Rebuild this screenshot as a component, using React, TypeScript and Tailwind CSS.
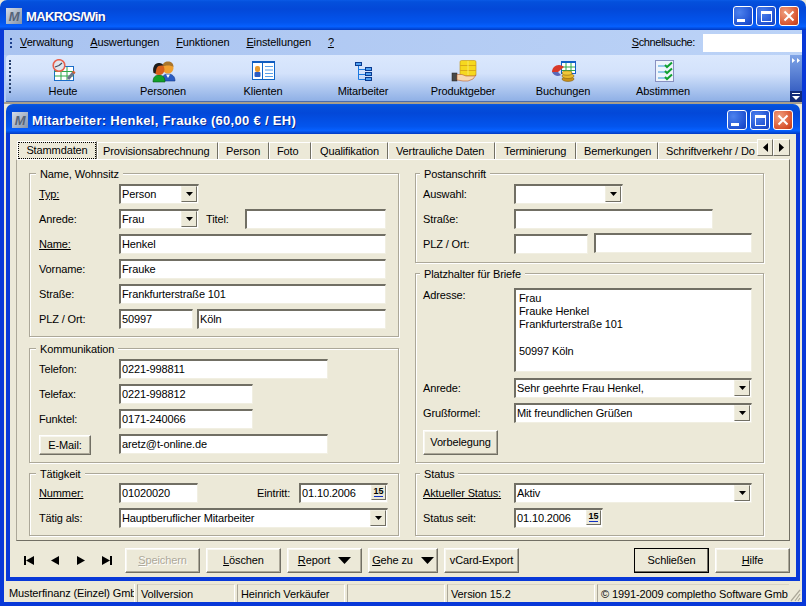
import type { ReactNode } from "react";

const titleBg =
  "bg-[linear-gradient(180deg,#0a5be6_0%,#0450dc_6%,#0348d8_30%,#0355ee_75%,#0660ff_88%,#0245d2_97%,#0236c0_100%)]";
const titleText =
  "ml-1 mt-px text-white font-bold text-[13px] whitespace-nowrap [text-shadow:1px_1px_0_#0a2a90]";

function AppIcon() {
  return (
    <div className="w-4 h-4 shrink-0 bg-[linear-gradient(135deg,#d4dce8,#8492a8)] flex items-center justify-center">
      <span className="text-[13px] leading-none font-bold italic text-[#566478] [text-shadow:none]">M</span>
    </div>
  );
}

function WinButtons() {
  const base = "w-5 h-5 rounded-[3px] border border-white flex items-center justify-center";
  const blue = "bg-[radial-gradient(circle_at_30%_30%,#4d82ee,#1d4fd0_75%,#1840b8)]";
  return (
    <div className="flex gap-[3px]">
      <div className={`${base} ${blue} items-end pb-[3px] justify-start pl-[3px]`}>
        <div className="w-[8px] h-[3px] bg-white" />
      </div>
      <div className={`${base} ${blue}`}>
        <div className="w-[11px] h-[11px] border border-white border-t-[3px]" />
      </div>
      <div className={`${base} bg-[radial-gradient(circle_at_30%_30%,#f0a080,#d8532e_70%,#b83a18)]`}>
        <svg width="12" height="12" viewBox="0 0 12 12">
          <path d="M1.5 1.5 10.5 10.5M10.5 1.5 1.5 10.5" stroke="#fff" strokeWidth="2" />
        </svg>
      </div>
    </div>
  );
}

function IconHeute() {
  return (
    <svg width="32" height="24" viewBox="0 0 32 24">
      <rect x="7.5" y="7.5" width="19" height="14" fill="#fff" stroke="#1a6cc8" />
      <path d="M7.5 12.5H26.5M7.5 17H26.5M14 8V21M20 8V21" stroke="#2fa84a" />
      <circle cx="12" cy="6.500" r="5.800" fill="#dfe6ee" stroke="#e8604c" strokeWidth="1.600" />
      <path d="M12 6.500 15 4M12 6.500 8 8" stroke="#3f4c5e" strokeWidth="1.200" />
      <path d="M27 13 21 20" stroke="#6a7488" strokeWidth="3" />
      <path d="M27.5 12.5 26 14" stroke="#d8602c" strokeWidth="3" />
    </svg>
  );
}

function IconPersonen() {
  return (
    <svg width="32" height="24" viewBox="0 0 32 24">
      <path d="M15 22c0-5 2-7 6-7s7 2 7 7Z" fill="#2a5cc4" stroke="#143a88" strokeWidth=".6" />
      <path d="M19 15.500 21 19 23 15.500Z" fill="#fff" />
      <circle cx="21" cy="9" r="5.500" fill="#f0a030" />
      <path d="M15.500 8c0-4 2.500-5.500 5.500-5.500s5.500 1.500 5.500 5.500c-2-2-9-2-11 0Z" fill="#a8752c" />
      <path d="M6 23c0-5 2.500-7 6-7s6 2 6 7Z" fill="#12a028" stroke="#0a5a18" strokeWidth=".6" />
      <circle cx="12" cy="10.500" r="5.500" fill="#d8601c" />
      <path d="M6.500 14c-1.500-6 1.500-10 5-10s4 1 5 2.500c-2.500 0-5.500 0-6.500 2s-1 4-1.500 6Z" fill="#1c1c1c" />
    </svg>
  );
}

function IconKlienten() {
  return (
    <svg width="32" height="24" viewBox="0 0 32 24">
      <rect x="5.500" y="3.500" width="22" height="17" fill="#fff" stroke="#0f66c8" />
      <rect x="5" y="2" width="23" height="2" fill="#0f5cc0" />
      <path d="M15.500 4V20" stroke="#0f66c8" />
      <path d="M18 7.500H26M18 11H26M18 14.500H26M18 17.500H26" stroke="#5aa0e8" />
      <rect x="8" y="7" width="5" height="6" rx="2" fill="#e89a2c" />
      <rect x="7.500" y="13" width="6" height="5" rx="1" fill="#2a5cc4" />
    </svg>
  );
}

function IconMitarbeiter() {
  return (
    <svg width="32" height="24" viewBox="0 0 32 24">
      <path d="M11.500 7V20.500H18M11.500 10.500H18M11.500 15.500H18" stroke="#1a78e0" fill="none" />
      <rect x="8.500" y="3.500" width="6" height="3" fill="#4fa0f0" stroke="#0a3a90" />
      <rect x="18.500" y="8.500" width="6" height="3" fill="#4fa0f0" stroke="#0a3a90" />
      <rect x="18.500" y="13.500" width="6" height="3" fill="#4fa0f0" stroke="#0a3a90" />
      <rect x="18.500" y="18.500" width="6" height="3" fill="#4fa0f0" stroke="#0a3a90" />
    </svg>
  );
}

function IconProdukt() {
  return (
    <svg width="32" height="24" viewBox="0 0 32 24">
      <rect x="13" y="1.500" width="16" height="15.500" rx="1.500" fill="#f6d81e" stroke="#c09010" strokeWidth=".6" />
      <path d="M13 6.500H29M13 11.500H29" stroke="#d8a818" />
      <path d="M21 2V16" stroke="#f8e860" />
      <rect x="5" y="14" width="5" height="8" fill="#4a4a48" stroke="#222" strokeWidth=".5" />
      <path d="M10 15.500h5l4 1.500h8l2-1-3 4-5 2h-5l-6-1Z" fill="#f8d8b0" stroke="#b86030" strokeWidth=".6" />
    </svg>
  );
}

function IconBuchungen() {
  return (
    <svg width="32" height="24" viewBox="0 0 32 24">
      <rect x="14.500" y="2.500" width="14" height="12" fill="#fff" stroke="#1060c8" />
      <rect x="14" y="2" width="15" height="2" fill="#1060c8" />
      <path d="M15 8H28M15 11.500H28M19 4V14M24 4V14" stroke="#2fa84a" />
      <path d="M5 13c0-4 3-7 7-7 2 0 4 1 5 2l-6 5Z" fill="#d83828" />
      <path d="M5 13 11 13l3 3c-3 2-7 1-9-3Z" fill="#5a68b8" />
      <ellipse cx="21" cy="20" rx="6" ry="2.500" fill="#c89018" stroke="#7a5408" strokeWidth=".5" />
      <ellipse cx="21" cy="17" rx="6" ry="2.500" fill="#e8b828" stroke="#7a5408" strokeWidth=".5" />
      <ellipse cx="20" cy="14" rx="5" ry="2.200" fill="#f0c838" stroke="#7a5408" strokeWidth=".5" />
    </svg>
  );
}

function IconAbstimmen() {
  return (
    <svg width="32" height="24" viewBox="0 0 32 24">
      <rect x="8.500" y="1.500" width="18" height="21" fill="#eef4fc" stroke="#8890c0" />
      <path d="M11 7H18M11 13H18M11 19H18" stroke="#3a98d8" />
      <path d="M18 6 20 8 25 3.500M18 12 20 14 25 9.500M18 18 20 20 25 15.500" stroke="#10a030" strokeWidth="2" fill="none" />
    </svg>
  );
}

const tools: [string, ReactNode][] = [
  ["Heute", <IconHeute />],
  ["Personen", <IconPersonen />],
  ["Klienten", <IconKlienten />],
  ["Mitarbeiter", <IconMitarbeiter />],
  ["Produktgeber", <IconProdukt />],
  ["Buchungen", <IconBuchungen />],
  ["Abstimmen", <IconAbstimmen />],
];

const inputBorder = "border-t-2 border-l-2 border-r border-b border-t-[#716f64] border-l-[#716f64] border-r-[#f1efe2] border-b-[#f1efe2] bg-white";

function Input({ w, children, className = "" }: { w: string; children?: ReactNode; className?: string }) {
  return (
    <div className={`${w} h-5 ${inputBorder} pl-px leading-[16px] whitespace-nowrap overflow-hidden ${className}`}>{children}</div>
  );
}

function Arrow() {
  return (
    <div className="w-4 h-4 shrink-0 bg-[#ece9d8] border border-t-[#f1efe2] border-l-[#f1efe2] border-r-[#716f64] border-b-[#716f64] flex items-center justify-center">
      <svg width="7" height="4" viewBox="0 0 7 4">
        <path d="M0 0H7L3.500 4Z" fill="#000" />
      </svg>
    </div>
  );
}

function Combo({ w, children }: { w: string; children?: ReactNode }) {
  return (
    <div className={`${w} h-5 ${inputBorder} flex justify-between pr-px`}>
      <span className="pl-px leading-[16px] whitespace-nowrap">{children}</span>
      <Arrow />
    </div>
  );
}

function DateBox({ w, children }: { w: string; children: ReactNode }) {
  return (
    <div className={`${w} h-5 ${inputBorder} flex justify-between pr-px`}>
      <span className="pl-px leading-[16px]">{children}</span>
      <div className="w-[15px] h-[15px] bg-[#ece9d8] border border-t-[#f1efe2] border-l-[#f1efe2] border-r-[#716f64] border-b-[#716f64] flex items-start justify-center">
        <span className="text-[9px] leading-[10px] font-bold border-b border-[#1030c0]">15</span>
      </div>
    </div>
  );
}

function Label({ children, w = "w-20", u = false }: { children: ReactNode; w?: string; u?: boolean }) {
  return <div className={`${w} shrink-0 leading-5 whitespace-nowrap ${u ? "underline" : ""}`}>{children}</div>;
}

function Row({ children }: { children: ReactNode }) {
  return <div className="flex h-5">{children}</div>;
}

function Group({ title, h, w, pl = "pl-[9px]", children }: { title: string; h: string; w: string; pl?: string; children: ReactNode }) {
  return (
    <div className={`${w} ${h} ${pl} border border-[#aca899] shadow-[inset_1px_1px_0_#fff,1px_1px_0_#fff]`}>
      <div className="w-fit h-[14px] -mt-[7px] -ml-[3px] mb-[3px] px-1 bg-[#ece9d8] leading-[14px] whitespace-nowrap">{title}</div>
      <div className="flex flex-col gap-[5px]">{children}</div>
    </div>
  );
}

function Button({ w, children, className = "" }: { w: string; children: ReactNode; className?: string }) {
  return (
    <div
      className={`${w} h-[25px] shrink-0 flex items-center justify-center gap-2 bg-[#ece9d8] border border-t-white border-l-white border-r-[#716f64] border-b-[#716f64] shadow-[inset_-1px_-1px_0_#aca899,inset_1px_1px_0_#f8f7f0] whitespace-nowrap ${className}`}
    >
      {children}
    </div>
  );
}

function DownTri() {
  return (
    <svg width="13" height="7" viewBox="0 0 13 7">
      <path d="M0 0H13L6.500 7Z" fill="#000" />
    </svg>
  );
}

function Nav({ d }: { d: string }) {
  return (
    <div className="w-[26px] flex justify-center">
      <svg width="11" height="9" viewBox="0 0 11 9">
        <path d={d} fill="#000" />
      </svg>
    </div>
  );
}

const tabs: [string, string][] = [
  ["Provisionsabrechnung", "w-[121px] pl-[5px]"],
  ["Person", "w-[51px] pl-[7px]"],
  ["Foto", "w-[42px] pl-[7px]"],
  ["Qualifikation", "w-[77px] pl-[8px]"],
  ["Vertrauliche Daten", "w-[107px] pl-[7px]"],
  ["Terminierung", "w-[81px] pl-[8px]"],
  ["Bemerkungen", "w-[82px] pl-[7px]"],
  ["Schriftverkehr / Do", "w-[100px] pl-[7px]"],
];

function StatusCell({ w, children, className = "" }: { w: string; children?: ReactNode; className?: string }) {
  return (
    <div className={`${w} h-[18px] shrink-0 pl-[3px] leading-[19px] whitespace-nowrap overflow-hidden border-l border-t border-t-[#d8d4c4] border-l-[#aca899] border-r border-r-white ${className}`}>
      {children}
    </div>
  );
}

export default function App() {
  return (
    <div className="w-[806px] h-[606px] overflow-hidden bg-[#ece9d8] text-[11px] text-black tracking-[-0.12px] font-['Liberation_Sans',Arial,sans-serif] select-none">
      {/* main title */}
      <div className={`h-[30px] flex items-center pt-[2px] pl-[6px] pr-[7px] ${titleBg} rounded-t-[7px]`}>
        <AppIcon />
        <span className={`${titleText} tracking-[-0.6px]`}>MAKROS/Win</span>
        <div className="ml-auto">
          <WinButtons />
        </div>
      </div>

      <div className="h-[576px] border-x-4 border-b-4 border-[#0838d8]">
        {/* menu */}
        <div className="h-[25px] flex items-center pl-[6px] bg-[linear-gradient(90deg,#a9c3f0,#bcd3f7)]">
          <div className="w-[2px] h-[10px] border-l-2 border-dotted border-[#1c3f8c]" />
          <div className="flex ml-[8px] gap-[17px]">
            <span><u>V</u>erwaltung</span>
            <span><u>A</u>uswertungen</span>
            <span><u>F</u>unktionen</span>
            <span><u>E</u>instellungen</span>
            <span><u>?</u></span>
          </div>
          <span className="ml-auto mr-2 tracking-[-0.4px]"><u>S</u>chnellsuche:</span>
          <div className="w-[99px] h-[18px] bg-white" />
        </div>

        {/* toolbar */}
        <div className="h-[47px] flex pl-[2px] bg-[#b4ccf4]">
          <div className="flex-1 flex rounded-tl-[4px] border-b border-[#4a6cb0] bg-[linear-gradient(180deg,#dbe8fd,#d3e2fb_40%,#8fb0e6)] pl-[3px]">
            <div className="mt-[5px] w-[2px] h-[33px] border-l-2 border-dotted border-[#27416e]" />
            <div className="flex ml-[2px]">
              {tools.map(([name, icon]) => (
                <div key={name} className="w-[100px] flex flex-col items-center pt-[4px]">
                  {icon}
                  <span className="mt-[1px] leading-[14px]">{name}</span>
                </div>
              ))}
            </div>
          </div>
          <div className="w-[12px] flex flex-col justify-between bg-[linear-gradient(180deg,#7fa4e6,#3a62c4_75%)] rounded-br-[3px]">
            <svg width="12" height="12" viewBox="0 0 12 12">
              <path d="M2 3 5 5.500 2 8ZM7 3 10 5.500 7 8Z" fill="#fff" />
            </svg>
            <div className="h-[11px] bg-[#112a78] flex justify-center items-center">
              <svg width="8" height="7" viewBox="0 0 8 7">
                <path d="M0 0H8V1H0ZM0 3H8L4 7Z" fill="#fff" />
              </svg>
            </div>
          </div>
        </div>
        <div className="h-[2px] bg-[#a89f8c]" />

        {/* child window */}
        <div className="mx-[2px] rounded-t-[7px] overflow-hidden">
          <div className={`h-[30px] flex items-center pt-[2px] pl-[6px] pr-[7px] ${titleBg}`}>
            <AppIcon />
            <span className={`${titleText} tracking-[0.3px]`}>Mitarbeiter: Henkel, Frauke (60,00 € / EH)</span>
            <div className="ml-auto">
              <WinButtons />
            </div>
          </div>
          <div className="h-[447px] border-x-4 border-b-4 border-[#0838d8] px-[6px]">
            {/* tabs */}
            <div className="h-[25px] flex items-end">
              <div className="w-[741px] flex items-end overflow-hidden">
                <div className="w-[80px] h-[19px] shrink-0 ml-px -mb-px z-10 relative bg-[#ece9d8] border-t border-l border-white border-r border-r-[#716f64] flex items-start justify-center">
                  <span className="mt-px w-[76px] h-[15px] text-center outline-1 outline-dotted outline-black leading-[15px]">Stammdaten</span>
                </div>
                {tabs.map(([name, w]) => (
                  <div key={name} className={`${w} h-[17px] shrink-0 leading-[16px] whitespace-nowrap border-t border-l border-white border-r border-r-[#716f64] overflow-hidden`}>
                    {name}
                  </div>
                ))}
              </div>
              <div className="flex mb-[3px]">
                <div className="w-4 h-[17px] bg-[#ece9d8] border border-t-white border-l-white border-r-[#716f64] border-b-[#716f64] flex items-center justify-center">
                  <svg width="5" height="9" viewBox="0 0 5 9"><path d="M5 0V9L0 4.500Z" fill="#000" /></svg>
                </div>
                <div className="w-[17px] h-[17px] bg-[#ece9d8] border border-t-white border-l-white border-r-[#716f64] border-b-[#716f64] flex items-center justify-center">
                  <svg width="5" height="9" viewBox="0 0 5 9"><path d="M0 0V9L5 4.500Z" fill="#000" /></svg>
                </div>
              </div>
            </div>

            {/* pane */}
            <div className="h-[382px] border border-[#aca899] border-t-white border-r-[#716f64] border-b-[#716f64] pt-[13px] pl-[12px] flex gap-4">
              <div className="w-[370px] flex flex-col">
                <Group title="Name, Wohnsitz" w="w-[370px]" h="h-[164px]">
                  <Row>
                    <Label u>Typ:</Label>
                    <Combo w="w-[80px]">Person</Combo>
                  </Row>
                  <Row>
                    <Label>Anrede:</Label>
                    <Combo w="w-[80px]">Frau</Combo>
                    <Label w="w-[39px] ml-[7px]">Titel:</Label>
                    <Input w="w-[141px]" />
                  </Row>
                  <Row>
                    <Label u>Name:</Label>
                    <Input w="w-[267px]">Henkel</Input>
                  </Row>
                  <Row>
                    <Label>Vorname:</Label>
                    <Input w="w-[267px]">Frauke</Input>
                  </Row>
                  <Row>
                    <Label>Straße:</Label>
                    <Input w="w-[267px]">Frankfurterstraße 101</Input>
                  </Row>
                  <Row>
                    <Label>PLZ / Ort:</Label>
                    <Input w="w-[74px]">50997</Input>
                    <Input w="w-[189px] ml-[4px]">Köln</Input>
                  </Row>
                </Group>
                <div className="h-[11px] shrink-0" />
                <Group title="Kommunikation" w="w-[370px]" h="h-[115px]">
                  <Row>
                    <Label>Telefon:</Label>
                    <Input w="w-[209px]">0221-998811</Input>
                  </Row>
                  <Row>
                    <Label>Telefax:</Label>
                    <Input w="w-[134px]">0221-998812</Input>
                  </Row>
                  <Row>
                    <Label>Funktel:</Label>
                    <Input w="w-[134px]">0171-240066</Input>
                  </Row>
                  <Row>
                    <div className="w-20 shrink-0 pt-px">
                      <Button w="w-[52px]" className="!h-[20px]">E-Mail:</Button>
                    </div>
                    <Input w="w-[209px]">aretz@t-online.de</Input>
                  </Row>
                </Group>
                <div className="h-[10px] shrink-0" />
                <Group title="Tätigkeit" w="w-[370px]" h="h-[63px]">
                  <div className="flex h-5 -mt-[1px]">
                    <Label u>Nummer:</Label>
                    <Input w="w-[79px]">01020020</Input>
                    <Label w="w-[42px] ml-[59px]">Eintritt:</Label>
                    <DateBox w="w-[89px]">01.10.2006</DateBox>
                  </div>
                  <Row>
                    <Label>Tätig als:</Label>
                    <Combo w="w-[269px]">Hauptberuflicher Mitarbeiter</Combo>
                  </Row>
                </Group>
              </div>

              <div className="w-[349px] flex flex-col">
                <Group title="Postanschrift" w="w-[349px]" h="h-[90px]" pl="pl-[7px]">
                  <Row>
                    <Label w="w-[91px]">Auswahl:</Label>
                    <Combo w="w-[109px]" />
                  </Row>
                  <Row>
                    <Label w="w-[91px]">Straße:</Label>
                    <Input w="w-[199px]" />
                  </Row>
                  <Row>
                    <Label w="w-[91px]">PLZ / Ort:</Label>
                    <Input w="w-[74px]" />
                    <Input w="w-[158px] ml-[6px] -mt-px" />
                  </Row>
                </Group>
                <div className="h-[10px] shrink-0" />
                <Group title="Platzhalter für Briefe" w="w-[349px]" h="h-[190px]" pl="pl-[7px]">
                  <div className="flex h-[84px] mt-[4px]">
                    <div className="-mt-[3px]">
                      <Label w="w-[91px]">Adresse:</Label>
                    </div>
                    <div className={`w-[238px] h-[84px] ${inputBorder} pl-[3px] pt-[2px] leading-[13px]`}>
                      <div>Frau</div>
                      <div>Frauke Henkel</div>
                      <div>Frankfurterstraße 101</div>
                      <div className="h-[14px]" />
                      <div>50997 Köln</div>
                    </div>
                  </div>
                  <div className="flex h-5 mt-[1px]">
                    <Label w="w-[91px]">Anrede:</Label>
                    <Combo w="w-[238px]">Sehr geehrte Frau Henkel,</Combo>
                  </div>
                  <Row>
                    <Label w="w-[91px]">Grußformel:</Label>
                    <Combo w="w-[238px]">Mit freundlichen Grüßen</Combo>
                  </Row>
                  <div className="mt-[2px]">
                    <Button w="w-[75px]">Vorbelegung</Button>
                  </div>
                </Group>
                <div className="h-[10px] shrink-0" />
                <Group title="Status" w="w-[349px]" h="h-[63px]" pl="pl-[7px]">
                  <div className="flex h-5 -mt-[1px]">
                    <Label w="w-[91px]" u>Aktueller Status:</Label>
                    <Combo w="w-[238px]">Aktiv</Combo>
                  </div>
                  <Row>
                    <Label w="w-[91px]">Status seit:</Label>
                    <DateBox w="w-[89px]">01.10.2006</DateBox>
                  </Row>
                </Group>
              </div>
            </div>

            {/* bottom bar */}
            <div className="flex pt-[7px] items-start">
              <div className="w-[109px] h-[25px] flex items-center">
                <Nav d="M0 0H2V9H0ZM2 4.500 10 0V9Z" />
                <Nav d="M1 4.500 9 0V9Z" />
                <Nav d="M1 0 9 4.500 1 9Z" />
                <Nav d="M0 0 8 4.500 0 9ZM8 0H10V9H8Z" />
              </div>
              <div className="flex gap-[6px]">
                <Button w="w-[75px]" className="text-[#aca899] [text-shadow:1px_1px_0_#fff]"><span><u>S</u>peichern</span></Button>
                <Button w="w-[75px]"><span><u>L</u>öschen</span></Button>
                <Button w="w-[75px]"><span><u>R</u>eport</span><DownTri /></Button>
                <Button w="w-[70px]"><span><u>G</u>ehe zu</span><DownTri /></Button>
                <Button w="w-[75px]">vCard-Export</Button>
              </div>
              <div className="ml-auto flex gap-[6px]">
                <Button w="w-[75px]" className="border-black! shadow-[inset_-1px_-1px_0_#716f64]!">Schließen</Button>
                <Button w="w-[75px]"><span><u>H</u>ilfe</span></Button>
              </div>
            </div>
          </div>
        </div>

        {/* status bar */}
        <div className="mt-[3px] flex gap-[2px] pl-[1px]">
          <StatusCell w="w-[130px]" className="border-l-0 border-t-0 pl-[4px]">Musterfinanz (Einzel) Gmb</StatusCell>
          <StatusCell w="w-[98px]">Vollversion</StatusCell>
          <StatusCell w="w-[108px]">Heinrich Verkäufer</StatusCell>
          <StatusCell w="w-[98px]" />
          <StatusCell w="w-[148px]">Version 15.2</StatusCell>
          <div className="w-[206px] flex">
            <StatusCell w="w-[192px]" className="border-r-0">© 1991-2009 completho Software Gmb</StatusCell>
            <svg width="12" height="18" viewBox="0 0 12 18" className="shrink-0">
              <path d="M11 6 2 17M11 10 6 17M11 14 9 17" stroke="#aca899" strokeWidth="1.200" />
            </svg>
          </div>
        </div>
      </div>
    </div>
  );
}
